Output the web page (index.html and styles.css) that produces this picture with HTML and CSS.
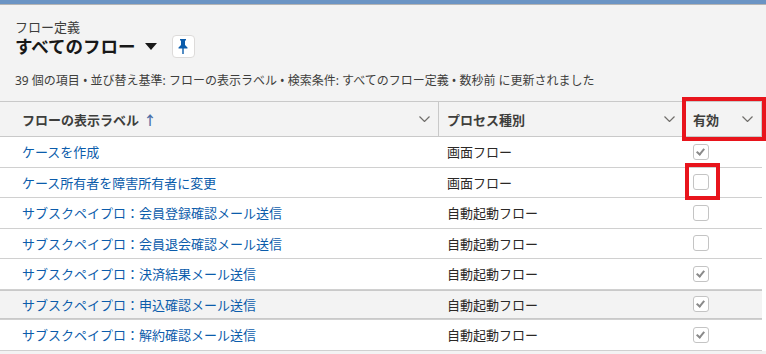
FILE: index.html
```html
<!DOCTYPE html>
<html lang="ja">
<head>
    <meta charset="UTF-8">
    <meta name="viewport" content="width=device-width, initial-scale=1.0">
    <title>フロー定義</title>
    <link rel="stylesheet" href="styles.css">
</head>
<body>

<div class="topbar"></div>

<div class="page-header">
    <div class="object-name">フロー定義</div>
    <div class="title-row">
        <h1 class="list-title">すべてのフロー</h1>
        <svg class="title-caret" width="12" height="7" viewBox="0 0 12 7"><path d="M0 0 H12 L6 7 Z" fill="#181818"/></svg>
        <button class="pin-btn" type="button" title="ピン留め">
            <svg width="10" height="15" viewBox="0 0 10 15">
                <path d="M2 0 H8 V1.5 H7 V6 L9.5 8.5 V9.5 H5.7 V15 H4.3 V9.5 H0.5 V8.5 L3 6 V1.5 H2 Z" fill="#0b5cab"/>
            </svg>
        </button>
    </div>
    <div class="summary">39 個の項目 • 並び替え基準: フローの表示ラベル • 検索条件: すべてのフロー定義 • 数秒前 に更新されました</div>
</div>

<div class="list">
    <div class="table">
        <div class="row head">
            <div class="cell col-label">
                <span>フローの表示ラベル <span class="sort-arrow">&#x2191;</span></span>
                <svg class="chev" width="11" height="6" viewBox="0 0 11 6"><path d="M0.5 0.5 L5.5 5.5 L10.5 0.5" fill="none" stroke="#706e6b" stroke-width="1.2"/></svg>
            </div>
            <div class="cell col-type">
                <span>プロセス種別</span>
                <svg class="chev" width="11" height="6" viewBox="0 0 11 6"><path d="M0.5 0.5 L5.5 5.5 L10.5 0.5" fill="none" stroke="#706e6b" stroke-width="1.2"/></svg>
            </div>
            <div class="cell col-active">
                <span>有効</span>
                <svg class="chev" width="11" height="6" viewBox="0 0 11 6"><path d="M0.5 0.5 L5.5 5.5 L10.5 0.5" fill="none" stroke="#706e6b" stroke-width="1.2"/></svg>
            </div>
        </div>

        <div class="row">
            <div class="cell col-label"><a href="#">ケースを作成</a></div>
            <div class="cell col-type">画面フロー</div>
            <div class="cell col-active"><span class="checkbox checked"></span></div>
        </div>
        <div class="row">
            <div class="cell col-label"><a href="#">ケース所有者を障害所有者に変更</a></div>
            <div class="cell col-type">画面フロー</div>
            <div class="cell col-active"><span class="checkbox"></span></div>
        </div>
        <div class="row">
            <div class="cell col-label"><a href="#">サブスクペイプロ：会員登録確認メール送信</a></div>
            <div class="cell col-type">自動起動フロー</div>
            <div class="cell col-active"><span class="checkbox"></span></div>
        </div>
        <div class="row">
            <div class="cell col-label"><a href="#">サブスクペイプロ：会員退会確認メール送信</a></div>
            <div class="cell col-type">自動起動フロー</div>
            <div class="cell col-active"><span class="checkbox"></span></div>
        </div>
        <div class="row">
            <div class="cell col-label"><a href="#">サブスクペイプロ：決済結果メール送信</a></div>
            <div class="cell col-type">自動起動フロー</div>
            <div class="cell col-active"><span class="checkbox checked"></span></div>
        </div>
        <div class="row hover">
            <div class="cell col-label"><a href="#">サブスクペイプロ：申込確認メール送信</a></div>
            <div class="cell col-type">自動起動フロー</div>
            <div class="cell col-active"><span class="checkbox checked"></span></div>
        </div>
        <div class="row">
            <div class="cell col-label"><a href="#">サブスクペイプロ：解約確認メール送信</a></div>
            <div class="cell col-type">自動起動フロー</div>
            <div class="cell col-active"><span class="checkbox checked"></span></div>
        </div>
    </div>

    <!-- annotation boxes drawn over the list -->
    <div class="mark mark-head"></div>
    <div class="mark mark-cell"></div>
</div>

</body>
</html>
```

FILE: styles.css
```css
body {
    margin: 0;
    background: #f3f3f3;
    font-family: "Noto Sans", "Noto Sans CJK JP", sans-serif;
    color: #3e3e3c;
    overflow: hidden;
}
.topbar {
    height: 4px;
    background: #6b94c4;
    border-bottom: 1px solid #b4b4b4;
}
.page-header {
    padding: 15px 15px 12px 15px;
}
.object-name {
    font-size: 13px;
    line-height: 14px;
    color: #3e3e3c;
}
.title-row {
    display: flex;
    align-items: center;
    height: 24px;
}
.list-title {
    margin: 0;
    font-size: 17.5px;
    font-weight: bold;
    color: #181818;
    line-height: 24px;
}
.title-caret {
    margin-left: 9px;
    margin-top: 1px;
}
.pin-btn {
    margin-left: 15px;
    width: 23px;
    height: 23px;
    padding: 0;
    border: 1px solid #dddbda;
    border-radius: 4px;
    background: #fff;
    display: flex;
    align-items: center;
    justify-content: center;
}
.summary {
    margin-top: 15px;
    font-size: 12px;
    line-height: 16px;
    color: #3e3e3c;
}
.list {
    position: relative;
    background: #fff;
}
.table {
    width: 762px;
}
.row {
    display: grid;
    grid-template-columns: 439px 245px 78px;
    height: 29.5px;
    border-bottom: 1px solid #d0d0d0;
    background: #fff;
}
.row.head {
    height: 34px;
    background: #f3f3f3;
    border-top: 1px solid #c9c9c9;
    border-bottom: 1px solid #c9c9c9;
}
.row.hover {
    background: #f3f3f3;
    box-shadow: inset 0 1px 0 #c9c9c9, inset 0 -1px 0 #c9c9c9;
}
.cell {
    display: flex;
    align-items: center;
    font-size: 13px;
    white-space: nowrap;
}
.head .cell {
    justify-content: space-between;
    font-weight: bold;
    color: #3e3e3c;
    border-right: 1px solid #c9c9c9;
    padding-right: 8px;
}
.col-label {
    padding-left: 22px;
}
.col-type {
    padding-left: 8px;
    color: #2b2826;
}
.col-active {
    padding-left: 9px;
}
.sort-arrow {
    color: #4a6ea6;
    font-weight: bold;
    margin-left: 1px;
}
.chev {
    flex: none;
}
a {
    color: #0b5cab;
    text-decoration: none;
}
.checkbox {
    width: 16px;
    height: 16px;
    box-sizing: border-box;
    border: 1px solid #c4c4c4;
    border-radius: 3px;
    background: #fff;
    position: relative;
}
.checkbox.checked::after {
    content: "";
    position: absolute;
    left: 4px;
    top: 2px;
    width: 3px;
    height: 6px;
    border-right: 2px solid #8a8a8a;
    border-bottom: 2px solid #8a8a8a;
    transform: rotate(40deg);
}
.mark {
    position: absolute;
    border: 4px solid #e8141c;
    box-sizing: border-box;
}
.mark-head {
    left: 682px;
    top: -4px;
    width: 84px;
    height: 44px;
}
.mark-cell {
    left: 685px;
    top: 62px;
    width: 35px;
    height: 37px;
}
```
